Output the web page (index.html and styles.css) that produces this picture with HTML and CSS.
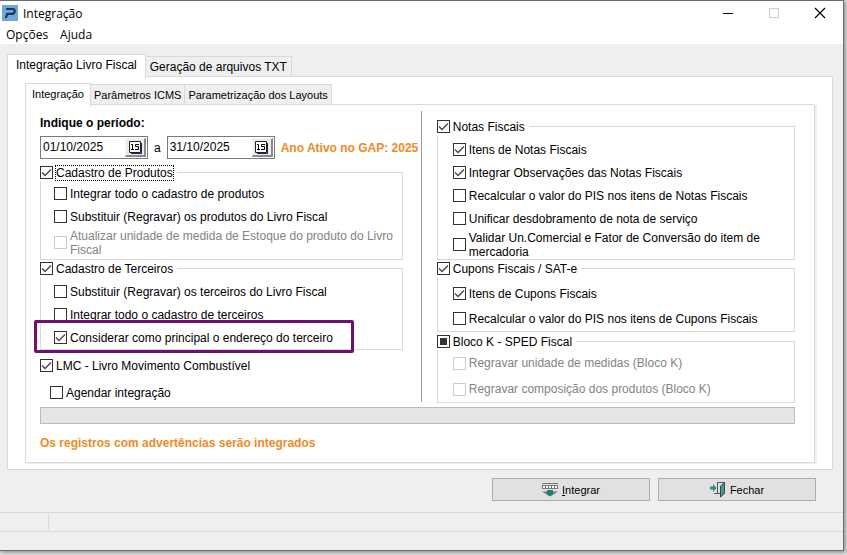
FILE: index.html
```html
<!DOCTYPE html>
<html lang="pt-BR">
<head>
  <meta charset="UTF-8">
  <meta name="viewport" content="width=device-width, initial-scale=1.0">
  <title>Integração</title>
  <link rel="stylesheet" href="styles.css">
</head>
<body>
  <div class="window">
    <header class="titlebar">
      <svg class="logo" width="16" height="16" viewBox="0 0 16 16" aria-hidden="true">
        <rect width="16" height="16" fill="#70a7d6"/>
        <path d="M4 4h6.500q2.500 0 2.200 2.300T10 8.800H5.200L3.800 13" fill="none" stroke="#16395f" stroke-width="2.200"/>
      </svg>
      <h1>Integração</h1>
      <div class="window-controls">
        <button type="button" aria-label="Minimizar">
          <svg width="12" height="12" viewBox="0 0 12 12"><path d="M1 6.5h10" stroke="#000"/></svg>
        </button>
        <button type="button" aria-label="Maximizar" disabled>
          <svg width="12" height="12" viewBox="0 0 12 12"><path d="M1.5 1.5h9v9h-9z" fill="none" stroke="#ccc"/></svg>
        </button>
        <button type="button" aria-label="Fechar janela">
          <svg width="12" height="12" viewBox="0 0 12 12"><path d="M1 1l10 10M11 1L1 11" stroke="#000" stroke-width="1.2"/></svg>
        </button>
      </div>
    </header>

    <nav class="menu">
      <a href="#">Opções</a>
      <a href="#">Ajuda</a>
    </nav>

    <main class="content">
      <div class="tabs" role="tablist">
        <button type="button" class="tab active" role="tab" aria-selected="true">Integração Livro Fiscal</button>
        <button type="button" class="tab" role="tab" aria-selected="false">Geração de arquivos TXT</button>
      </div>
      <div class="panel">
        <div class="tabs tabs-small" role="tablist">
          <button type="button" class="tab active" role="tab" aria-selected="true">Integração</button>
          <button type="button" class="tab" role="tab" aria-selected="false">Parâmetros ICMS</button>
          <button type="button" class="tab" role="tab" aria-selected="false">Parametrização dos Layouts</button>
        </div>
        <form class="sheet">
          <div class="columns">
            <div class="column column-left">
              <h2>Indique o período:</h2>
              <div class="period">
                <div class="date">
                  <input type="text" id="inicio" value="01/10/2025" aria-label="Data inicial">
                  <button type="button" aria-label="Escolher data inicial">
                    <svg width="13" height="13" viewBox="0 0 13 13">
                      <path d="M2 12.5h10.5V2" fill="none" stroke="#23235a"/>
                      <path d="M.5.5h11v11H.5z" fill="#fff" stroke="#222"/>
                      <path d="M2 3.5h1.5v5M2 8.5h3M10 3.5H6.500v2h3v3H6" fill="none" stroke="#000"/>
                    </svg>
                  </button>
                </div>
                <span>a</span>
                <div class="date">
                  <input type="text" id="fim" value="31/10/2025" aria-label="Data final">
                  <button type="button" aria-label="Escolher data final">
                    <svg width="13" height="13" viewBox="0 0 13 13">
                      <path d="M2 12.5h10.5V2" fill="none" stroke="#23235a"/>
                      <path d="M.5.5h11v11H.5z" fill="#fff" stroke="#222"/>
                      <path d="M2 3.5h1.5v5M2 8.5h3M10 3.5H6.500v2h3v3H6" fill="none" stroke="#000"/>
                    </svg>
                  </button>
                </div>
                <strong class="notice">Ano Ativo no GAP: 2025</strong>
              </div>

              <fieldset class="group group-produtos">
                <legend><label><input type="checkbox" checked><span class="focused">Cadastro de Produtos</span></label></legend>
                <label><input type="checkbox">Integrar todo o cadastro de produtos</label>
                <label><input type="checkbox">Substituir (Regravar) os produtos do Livro Fiscal</label>
                <label class="disabled two-lines"><input type="checkbox" disabled><span>Atualizar unidade de medida de Estoque do produto do Livro Fiscal</span></label>
              </fieldset>

              <fieldset class="group">
                <legend><label><input type="checkbox" checked>Cadastro de Terceiros</label></legend>
                <label><input type="checkbox">Substituir (Regravar) os terceiros do Livro Fiscal</label>
                <label><input type="checkbox">Integrar todo o cadastro de terceiros</label>
                <label class="highlight"><input type="checkbox" checked>Considerar como principal o endereço do terceiro</label>
              </fieldset>

              <label class="option"><input type="checkbox" checked>LMC - Livro Movimento Combustível</label>
              <label class="option option-sub"><input type="checkbox">Agendar integração</label>
            </div>

            <div class="divider"></div>

            <div class="column column-right">
              <fieldset class="group">
                <legend><label><input type="checkbox" checked>Notas Fiscais</label></legend>
                <label><input type="checkbox" checked>Itens de Notas Fiscais</label>
                <label><input type="checkbox" checked>Integrar Observações das Notas Fiscais</label>
                <label><input type="checkbox">Recalcular o valor do PIS nos itens de Notas Fiscais</label>
                <label><input type="checkbox">Unificar desdobramento de nota de serviço</label>
                <label class="two-lines"><input type="checkbox"><span>Validar Un.Comercial e Fator de Conversão do item de mercadoria</span></label>
              </fieldset>

              <fieldset class="group group-cupons">
                <legend><label><input type="checkbox" checked>Cupons Fiscais / SAT-e</label></legend>
                <label><input type="checkbox" checked>Itens de Cupons Fiscais</label>
                <label><input type="checkbox">Recalcular o valor do PIS nos itens de Cupons Fiscais</label>
              </fieldset>

              <fieldset class="group group-bloco">
                <legend><label><input type="checkbox" id="blocoK">Bloco K - SPED Fiscal</label></legend>
                <label class="disabled"><input type="checkbox" disabled>Regravar unidade de medidas (Bloco K)</label>
                <label class="disabled"><input type="checkbox" disabled>Regravar composição dos produtos (Bloco K)</label>
              </fieldset>
            </div>
          </div>

          <progress value="0" max="100" aria-label="Progresso da integração"></progress>
          <p class="notice">Os registros com advertências serão integrados</p>
        </form>
      </div>

      <div class="actions">
        <button type="button">
          <svg width="16" height="16" viewBox="0 0 16 16" aria-hidden="true">
            <path d="M0 1.5h16" stroke="#777"/>
            <path d="M0 5h16" stroke="#777" stroke-width="4"/>
            <path d="M1 5h14" stroke="#fff" stroke-width="2" stroke-dasharray="2 1"/>
            <path d="M0 9.500h16l-3 2H3z" fill="#777"/>
            <path d="M5 8h6v3.500h2L8 14.500 3 11.500h2z" fill="#1f7f70"/>
          </svg>
          <span><u>I</u>ntegrar</span>
        </button>
        <button type="button">
          <svg width="16" height="16" viewBox="0 0 16 16" aria-hidden="true">
            <path d="M0 4.500h3V2l3.500 4L3 10V7.500H0z" fill="#2c8c84"/>
            <path d="M7.500 11V.5h7M4 11.500h6" fill="none" stroke="#555"/>
            <path d="M10.500 4l4-3.500v11l-4 3.500z" fill="#4b9a91" stroke="#444"/>
          </svg>
          <span>Fechar</span>
        </button>
      </div>
    </main>

    <footer class="statusbar">
      <div class="status-cells"><span></span><span></span></div>
    </footer>
  </div>

  <script>
    // Bloco K starts partially selected
    document.getElementById('blocoK').indeterminate = true;
  </script>
</body>
</html>
```

FILE: styles.css
```css
* {
  margin: 0;
  padding: 0;
  box-sizing: border-box;
}

body {
  background: #dcdcdc;
  color: #000;
  font-family: "Liberation Sans", Arial, sans-serif;
  font-size: 12px;
  line-height: 14px;
  padding: 0 3px 4px 0;
}

.window {
  display: flex;
  flex-direction: column;
  min-height: calc(100vh - 4px);
  background: #efefef;
  border: 1px solid #6b6b6b;
  border-left: 0;
  box-shadow: 1px 1px 4px rgba(0, 0, 0, 0.4);
}

button,
input {
  font: inherit;
  color: inherit;
}

/* Title bar and menu */
.titlebar {
  display: flex;
  align-items: center;
  height: 24px;
  padding-left: 2px;
  background: #fff;
}

.titlebar h1 {
  flex: 1;
  margin-left: 5px;
  font: 12px "Open Sans", "Noto Sans", sans-serif;
}

.window-controls {
  display: flex;
}

.window-controls button {
  display: flex;
  align-items: center;
  justify-content: center;
  width: 46px;
  height: 24px;
  background: none;
  border: 0;
}

.menu {
  display: flex;
  align-items: center;
  gap: 12px;
  height: 19px;
  padding: 0 6px;
  background: #fff;
  font: 12px "Open Sans", "Noto Sans", sans-serif;
}

.menu a {
  color: #000;
  text-decoration: none;
}

/* Tabs */
.content {
  padding: 10px 10px 0 7px;
}

.tabs {
  display: flex;
  align-items: flex-end;
}

.tab {
  height: 21px;
  padding: 0 4px;
  background: #efefef;
  border: 1px solid #d9d9d9;
  border-left: 0;
  white-space: nowrap;
}

.tab.active {
  position: relative;
  height: 24px;
  margin-bottom: -1px;
  padding: 0 8px 3px;
  background: #fff;
  border-left: 1px solid #d9d9d9;
  border-bottom: 0;
}

.tabs-small .tab {
  padding: 0 3px;
  font-size: 11px;
}

.tabs-small .tab.active {
  height: 23px;
  padding: 0 6px 2px;
}

.panel,
.sheet {
  background: #fff;
  border: 1px solid #d9d9d9;
}

.tabs + .panel,
.tabs + .sheet {
  margin-top: -1px;
}

.panel {
  padding: 6px 17px;
}

.sheet {
  padding: 6px 19px 10px 14px;
  box-shadow: 2px 1px #efefef;
}

/* Form */
.columns {
  display: grid;
  grid-template-columns: minmax(0, 51fr) 1px minmax(0, 50fr);
  margin-bottom: 3px;
}

.column-left {
  padding: 4px 18px 0 0;
}

.column-right {
  padding: 7px 0 0 15px;
}

.divider {
  margin-bottom: 2px;
  background: #9c9c9c;
}

h2 {
  margin-bottom: 4px;
  font-size: 12px;
  line-height: 17px;
}

.period {
  display: flex;
  align-items: center;
  gap: 6px;
  margin-bottom: 5px;
  white-space: nowrap;
}

.date {
  display: flex;
  width: 108px;
  height: 23px;
  padding: 1px;
  background: #fff;
  border: 1px solid #7a7a7a;
}

.date input {
  flex: 1;
  min-width: 0;
  padding: 0 1px 1px;
  border: 0;
}

.date button {
  display: flex;
  align-items: center;
  justify-content: center;
  width: 21px;
  background: #ececec;
  border: 1px solid #f6f6f6;
  border-right: 2px solid #8a8a8a;
  border-bottom: 2px solid #8a8a8a;
}

.notice {
  color: #f08a24;
  font-weight: bold;
}

.group {
  --indent: 13px;
  --row: 23px;
  min-width: 0;
  padding-top: 3px;
  border: 1px solid #d9d9d9;
}

.group legend {
  margin-left: -1px;
  padding-right: 4px;
  background: #fff;
}

.group label,
.option {
  display: flex;
  align-items: center;
  gap: 3px;
}

.group legend label {
  height: 17px;
}

.group > label {
  width: fit-content;
  min-height: var(--row);
  margin-left: var(--indent);
}

.group > .two-lines {
  min-height: 29px;
}

.column-right .group {
  --indent: 15px;
}

.group-produtos {
  padding: 1px 0 2px;
}

.column-right .group-cupons {
  --row: 25px;
  padding-top: 4px;
}

.column-right .group-bloco {
  --row: 26px;
  padding-top: 0;
  margin-top: 1px;
}

.option {
  height: 23px;
  margin-top: 4px;
}

.option-sub {
  margin-left: 10px;
}

.disabled {
  color: #838383;
}

.focused {
  outline: 1px dotted #000;
}

input[type="checkbox"] {
  appearance: none;
  flex: none;
  width: 13px;
  height: 13px;
  background: #fff center no-repeat;
  border: 1px solid #333;
}

input[type="checkbox"]:checked {
  background-image: url("data:image/svg+xml,%3Csvg xmlns='http://www.w3.org/2000/svg' width='11' height='11'%3E%3Cpath d='M1 5.500l3 3 6-6' fill='none' stroke='%23444' stroke-width='1.300'/%3E%3C/svg%3E");
}

input[type="checkbox"]:indeterminate {
  background: #333;
  box-shadow: inset 0 0 0 2px #fff;
}

input[type="checkbox"]:disabled {
  border-color: #ccc;
}

/* Frame drawn around the option that deserves attention */
.highlight {
  position: relative;
}

.highlight::after {
  content: "";
  position: absolute;
  inset: -6px -21px -4px -20px;
  border: 3px solid #6e0f72;
  border-radius: 2px;
  pointer-events: none;
}

progress {
  display: block;
  appearance: none;
  width: 100%;
  height: 17px;
  background: #e6e6e6;
  border: 1px solid #bcbcbc;
}

progress::-webkit-progress-bar {
  background: #e6e6e6;
}

p.notice {
  margin-top: 11px;
  line-height: 17px;
}

/* Actions and status bar */
.actions {
  display: flex;
  justify-content: flex-end;
  gap: 8px;
  padding: 8px 17px 11px 0;
}

.actions button {
  display: flex;
  align-items: center;
  justify-content: center;
  gap: 4px;
  width: 158px;
  height: 23px;
  background: #e1e1e1;
  border: 1px solid #adadad;
  font-size: 11px;
}

.statusbar {
  border-top: 1px solid #d7d7d7;
}

.status-cells {
  display: flex;
  height: 19px;
  padding: 1px 0;
  border-bottom: 1px solid #d7d7d7;
}

.status-cells span:first-child {
  width: 49px;
  border-right: 1px solid #d7d7d7;
}
```
